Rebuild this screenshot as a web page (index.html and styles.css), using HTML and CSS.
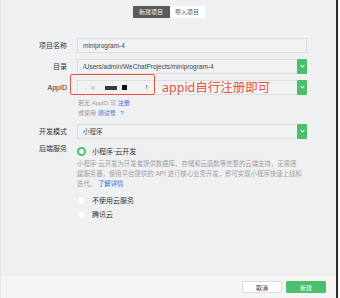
FILE: index.html
```html
<!doctype html>
<html lang="zh-CN">
    <head>
        <title>新建项目</title>
        <meta name="viewport" content="width=device-width, initial-scale=1"/>
        <link rel="stylesheet" href="styles.css">
    </head>
    <body>
        <div class="window">
            <div class="head">
                <span class="tab tab--active">新建项目</span>
                <span class="tab">导入项目</span>
            </div>
            <div class="form">
                <div class="row">
                    <label class="label">项目名称</label>
                    <div class="field"><div class="input">miniprogram-4</div></div>
                </div>
                <div class="row">
                    <label class="label">目录</label>
                    <div class="field">
                        <div class="input input--select">/Users/admin/WeChatProjects/miniprogram-4<span class="arrow"></span></div>
                    </div>
                </div>
                <div class="row">
                    <label class="label">AppID</label>
                    <div class="field field--appid">
                        <div class="input input--select">
                            <span class="mask mask--comma">,</span>
                            <span class="mask mask--light"></span>
                            <span class="mask mask--dark"></span>
                            <span class="mask mask--black"></span>
                            <span class="mask mask--f">f</span>
                            <span class="arrow"></span>
                        </div>
                        <span class="callout"></span>
                        <span class="note">appid自行注册即可</span>
                    </div>
                </div>
                <div class="row row--hint">
                    <span></span>
                    <div class="hint">
                        <div>若无 AppID 可 <a class="link">注册</a></div>
                        <div>或使用 <a class="link">测试号</a> <a class="link link--q">?</a></div>
                    </div>
                </div>
                <div class="row row--mode">
                    <label class="label">开发模式</label>
                    <div class="field">
                        <div class="input input--select">小程序<span class="arrow"></span></div>
                    </div>
                </div>
                <div class="row row--backend">
                    <label class="label">后端服务</label>
                    <div class="options">
                        <div class="option"><span class="radio radio--on"></span>小程序·云开发</div>
                        <p class="desc">小程序·云开发为开发者提供数据库、存储和云函数等完整的云端支持，无需搭<br>建服务器，使用平台提供的 API 进行核心业务开发，即可实现小程序快速上线和<br>迭代。 <a class="link">了解详情</a></p>
                        <div class="option option--second"><span class="radio"></span>不使用云服务</div>
                        <div class="option option--third"><span class="radio"></span>腾讯云</div>
                    </div>
                </div>
            </div>
            <div class="foot">
                <button class="btn">取消</button>
                <button class="btn btn--primary">新建</button>
            </div>
        </div>
    </body>
</html>
```

FILE: styles.css
```css
body {
    margin: 0;
    background-color: #f7f7f7;
    font-family: "Liberation Sans", "Noto Sans CJK SC", sans-serif;
    color: #333;
}
.window {
    width: 338px;
    height: 298px;
    background-color: #eff0f2;
    border-right: 2px solid #2b2b2b;
    border-left: 1px solid #e4e6e8;
    box-sizing: border-box;
    display: flex;
    flex-direction: column;
}
.head {
    height: 38px;
    padding-top: 6px;
    box-sizing: border-box;
    display: flex;
    justify-content: center;
}
.tab {
    height: 12px;
    line-height: 12px;
    font-size: 6px;
    width: 35px;
    text-align: center;
    background-color: #fff;
    color: #555;
}
.tab--active {
    width: 37px;
    background-color: #5b5b5b;
    color: #f2f2f2;
}
.row {
    display: grid;
    grid-template-columns: 66px 230px;
    column-gap: 10px;
    margin-bottom: 6px;
}
.label {
    text-align: right;
    font-size: 7px;
    line-height: 15px;
    color: #333;
}
.field {
    position: relative;
}
.input {
    height: 15px;
    line-height: 13px;
    box-sizing: border-box;
    border: 1px solid #dcdee1;
    background-color: #f1f2f4;
    font-size: 6.5px;
    padding-left: 5px;
    color: #444;
    position: relative;
    display: flex;
    align-items: center;
}
.arrow {
    position: absolute;
    right: -1px;
    top: -1px;
    width: 10px;
    height: 15px;
    background-color: #4cbf6c;
    border-radius: 1px;
}
.arrow::after {
    content: "";
    position: absolute;
    left: 3.5px;
    top: 5px;
    width: 2px;
    height: 2px;
    border-right: 1px solid #e9f7ee;
    border-bottom: 1px solid #e9f7ee;
    transform: rotate(45deg);
}
.mask {
    display: inline-block;
    margin-right: 4px;
}
.mask--comma {
    font-size: 6px;
    margin-left: 2px;
    color: #666;
}
.mask--light {
    width: 4px;
    height: 4px;
    background-color: #d8d9db;
    margin-right: 10px;
}
.mask--dark {
    width: 12px;
    height: 4px;
    background-color: #3b3b3b;
    margin-right: 5px;
}
.mask--black {
    width: 5px;
    height: 5px;
    background-color: #111;
    margin-right: 19px;
}
.mask--f {
    font-size: 6px;
    color: #555;
}
.callout {
    position: absolute;
    left: -7px;
    top: -6px;
    width: 85px;
    height: 21px;
    box-sizing: border-box;
    border: 1.5px solid #e8553e;
    border-radius: 2px;
}
.note {
    position: absolute;
    left: 85px;
    top: -1px;
    line-height: 17px;
    color: #e8553e;
    font-family: "Noto Sans", "Noto Sans CJK SC", sans-serif;
    font-size: 12.5px;
}
.row--hint {
    margin-top: -3px;
}
.hint {
    font-size: 6px;
    line-height: 10px;
    color: #999;
    padding-left: 1px;
}
.link {
    color: #3b6fd6;
}
.link--q {
    margin-left: 3px;
}
.row--backend {
    margin-top: 7px;
}
.row--backend .label {
    line-height: 10px;
    margin-top: -2px;
}
.option {
    display: flex;
    align-items: center;
    height: 10px;
    font-size: 7px;
    color: #333;
}
.option--second {
    margin-top: 6px;
}
.option--third {
    margin-top: 4px;
}
.radio {
    width: 9px;
    height: 9px;
    box-sizing: border-box;
    border-radius: 50%;
    background-color: #fff;
    border: 1px solid #eaeaea;
    margin-right: 6px;
}
.radio--on {
    border: 2.5px solid #4cbf6c;
}
.desc {
    margin: 3px 0 0 0;
    font-size: 6.4px;
    line-height: 10px;
    color: #a0a0a0;
    white-space: nowrap;
}
.foot {
    margin-top: auto;
    height: 22px;
    background-color: #f5f5f6;
    display: flex;
    justify-content: flex-end;
    align-items: flex-start;
    padding: 5px 10px 0 0;
    box-sizing: border-box;
    gap: 4px;
}
.btn {
    width: 40px;
    height: 12px;
    padding: 0;
    border: 1px solid #dcdcdc;
    background-color: #fff;
    font-family: inherit;
    font-size: 6px;
    color: #333;
    border-radius: 1px;
}
.btn--primary {
    background-color: #4cbf6c;
    border-color: #4cbf6c;
    color: #fff;
}
```
